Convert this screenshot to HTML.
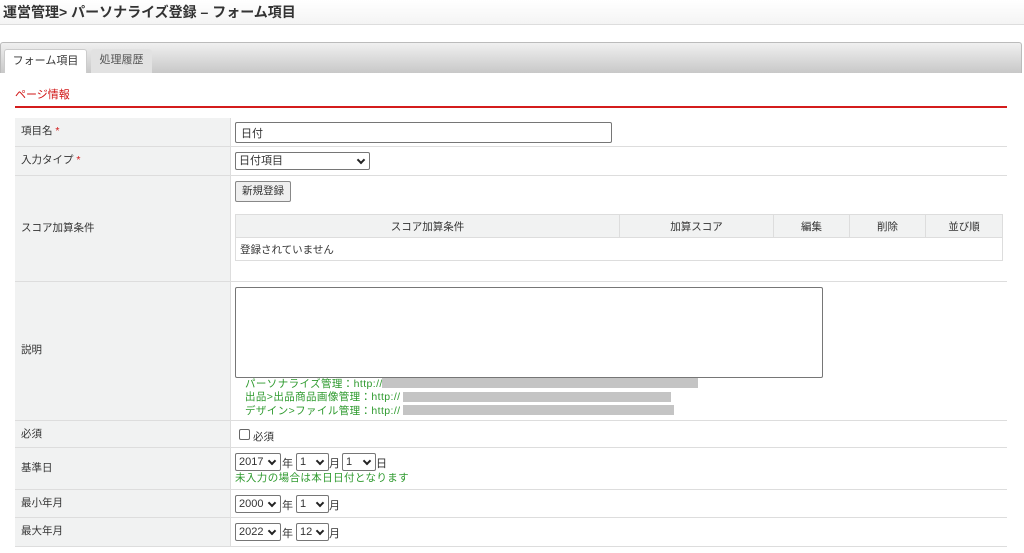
<!DOCTYPE html><html><head><meta charset="utf-8"><style>
*{margin:0;padding:0;box-sizing:border-box}
body{width:1024px;height:553px;background:#fff;font-family:"Liberation Sans","Noto Sans CJK JP",sans-serif;font-size:11px;color:#333;position:relative;overflow:hidden}
.a{position:absolute}
.title{left:0;top:0;width:1024px;height:25px;background:linear-gradient(#fff,#f4f4f4);border-bottom:1px solid #ddd;font-size:14px;font-weight:bold;color:#333;padding:2px 0 0 3px}
.tabbar{left:0;top:42px;width:1022px;height:31px;background:linear-gradient(#f0f0f0,#c8c8c8);border:1px solid #bbb;border-bottom:none;border-radius:3px 3px 0 0}
.tab{top:49px;height:24px;font-size:11px;text-align:center;line-height:22px;border-radius:3px 3px 0 0}
.cell{border-bottom:1px solid #ddd}
.lab{left:15px;width:216px;background:#f1f2f2;border-right:1px solid #ddd;padding-left:6px;font-size:10.5px}
.val{left:231px;width:776px;background:#fff}
.sel{height:18px;border:1px solid #767676;border-radius:2px;background:#fff;font-size:11px;padding-left:3px;line-height:16px}
.sel:after{content:"";position:absolute;right:5px;top:4px;width:4px;height:4px;border-right:2px solid #222;border-bottom:2px solid #222;transform:rotate(45deg)}
.g{color:#2e9a2e;font-size:10.5px;letter-spacing:0.4px}
.bar{background:#c4c4c4;height:10px}
th,td{font-weight:normal}
</style></head><body>
<div class="a title">運営管理&gt; パーソナライズ登録 – フォーム項目</div>
<div class="a tabbar"></div>
<div class="a tab" style="left:4px;width:83px;background:#fff;border:1px solid #ccc;border-bottom:none">フォーム項目</div>
<div class="a tab" style="left:91px;width:61px;background:#e2e2e2;color:#555">処理履歴</div>
<div class="a" style="left:15px;top:86px;color:#d01515;font-size:11px">ページ情報</div>
<div class="a" style="left:15px;top:106px;width:992px;height:2px;background:#d41c1c"></div>
<div class="a" style="left:15px;top:118px;width:992px;height:429px;border:1px solid #ddd"></div>
<div class="a lab cell" style="top:118px;height:29px;line-height:26px">項目名 <span style="color:#d01515">*</span></div>
<div class="a val cell" style="top:118px;height:29px"></div>
<div class="a" style="left:235px;top:122px;width:377px;height:21px;border:1px solid #767676;border-radius:2px;padding:2px 5px;font-size:11px">日付</div>
<div class="a lab cell" style="top:147px;height:29px;line-height:26px">入力タイプ <span style="color:#d01515">*</span></div>
<div class="a val cell" style="top:147px;height:29px"></div>
<div class="a sel" style="left:235px;top:152px;width:135px">日付項目</div>
<div class="a lab cell" style="top:176px;height:106px;line-height:104px">スコア加算条件</div>
<div class="a val cell" style="top:176px;height:106px"></div>
<div class="a" style="left:235px;top:181px;width:56px;height:21px;border:1px solid #888;border-radius:2px;background:#efefef;font-size:10.5px;text-align:center;line-height:19px">新規登録</div>
<table class="a" style="left:235px;top:214px;width:768px;border-collapse:collapse;font-size:10.5px">
<tr style="background:#f1f2f2;height:23px"><th style="border:1px solid #ddd;width:384px">スコア加算条件</th><th style="border:1px solid #ddd;width:154px">加算スコア</th><th style="border:1px solid #ddd;width:76px">編集</th><th style="border:1px solid #ddd;width:76px">削除</th><th style="border:1px solid #ddd">並び順</th></tr>
<tr style="height:23px"><td colspan="5" style="border:1px solid #ddd;padding-left:4px">登録されていません</td></tr></table>
<div class="a lab cell" style="top:282px;height:139px;line-height:136px">説明</div>
<div class="a val cell" style="top:282px;height:139px"></div>
<div class="a" style="left:235px;top:287px;width:588px;height:91px;border:1px solid #767676;border-radius:2px"></div>
<div class="a g" style="left:245px;top:376px">パーソナライズ管理：http://</div><div class="a bar" style="left:382px;top:378px;width:316px"></div>
<div class="a g" style="left:245px;top:389px">出品&gt;出品商品画像管理：http://</div><div class="a bar" style="left:403px;top:392px;width:268px"></div>
<div class="a g" style="left:245px;top:403px">デザイン&gt;ファイル管理：http://</div><div class="a bar" style="left:403px;top:405px;width:271px"></div>
<div class="a lab cell" style="top:421px;height:27px;line-height:26px">必須</div>
<div class="a val cell" style="top:421px;height:27px"></div>
<div class="a" style="left:239px;top:429px;width:11px;height:11px;border:1px solid #666;border-radius:2px"></div>
<div class="a" style="left:253px;top:429px;font-size:10.5px">必須</div>
<div class="a lab cell" style="top:448px;height:42px;line-height:40px">基準日</div>
<div class="a val cell" style="top:448px;height:42px"></div>
<div class="a sel" style="left:235px;top:453px;width:46px">2017</div><div class="a" style="left:282px;top:455px">年</div>
<div class="a sel" style="left:296px;top:453px;width:33px">1</div><div class="a" style="left:329px;top:455px">月</div>
<div class="a sel" style="left:342px;top:453px;width:34px">1</div><div class="a" style="left:376px;top:455px">日</div>
<div class="a g" style="left:235px;top:470px">未入力の場合は本日日付となります</div>
<div class="a lab cell" style="top:490px;height:28px;line-height:26px">最小年月</div>
<div class="a val cell" style="top:490px;height:28px"></div>
<div class="a sel" style="left:235px;top:495px;width:46px">2000</div><div class="a" style="left:282px;top:497px">年</div>
<div class="a sel" style="left:296px;top:495px;width:33px">1</div><div class="a" style="left:329px;top:497px">月</div>
<div class="a lab" style="top:518px;height:28px;line-height:26px">最大年月</div>
<div class="a val" style="top:518px;height:28px"></div>
<div class="a sel" style="left:235px;top:523px;width:46px">2022</div><div class="a" style="left:282px;top:525px">年</div>
<div class="a sel" style="left:296px;top:523px;width:33px">12</div><div class="a" style="left:329px;top:525px">月</div>
</body></html>
